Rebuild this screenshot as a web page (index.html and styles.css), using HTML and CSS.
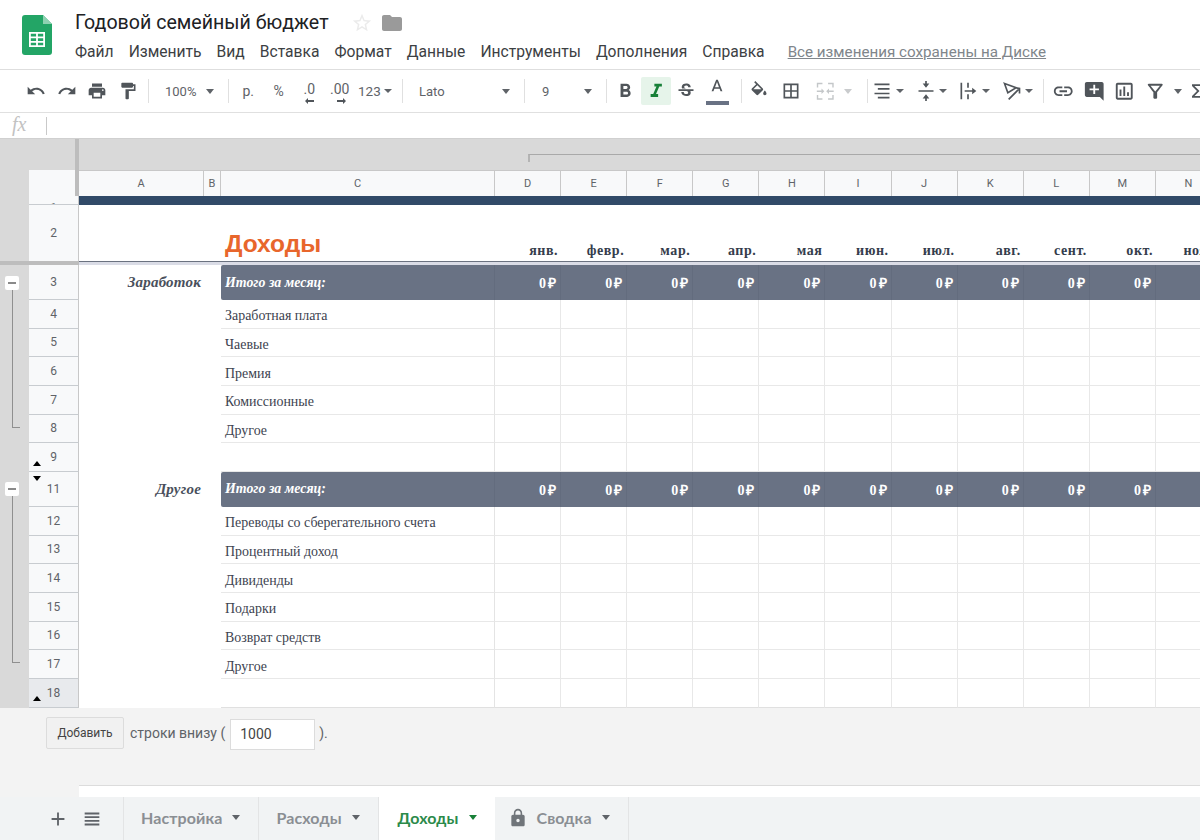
FILE: index.html
```html
<!DOCTYPE html>
<html lang="ru">
<head>
<meta charset="utf-8">
<title>Годовой семейный бюджет</title>
<link rel="stylesheet" href="styles.css">
</head>
<body>
<header class="top">
  <svg class="logo" viewBox="0 0 30 40"><path fill="#23a566" d="M3 0h18l9 9v28a3 3 0 0 1-3 3H3a3 3 0 0 1-3-3V3a3 3 0 0 1 3-3z"/><path fill="#8ed1b1" d="M21 0l9 9h-9z"/><path fill="#fff" fill-rule="evenodd" d="M7 17h16v15H7zm1.800 1.800v2.800h5.300v-2.800zm7.100 0v2.800h5.300v-2.800zm-7.100 4.500v2.800h5.300v-2.800zm7.100 0v2.800h5.300v-2.800zm-7.100 4.500v2.400h5.300v-2.400zm7.100 0v2.400h5.300v-2.400z"/></svg>
  <div class="top-main">
    <div class="title-row">
      <span class="doc-title">Годовой семейный бюджет</span>
      <svg class="star" viewBox="0 0 24 24"><path d="M22 9.24l-7.19-.62L12 2 9.19 8.63 2 9.24l5.46 4.73L5.82 21 12 17.27 18.18 21l-1.63-7.03L22 9.24zM12 15.4l-3.76 2.27 1-4.28-3.32-2.88 4.38-.38L12 6.1l1.71 4.04 4.38.38-3.32 2.88 1 4.28L12 15.4z"/></svg>
      <svg class="folder" viewBox="0 0 24 24"><path d="M10 4H4c-1.1 0-1.99.9-1.99 2L2 18c0 1.1.9 2 2 2h16c1.1 0 2-.9 2-2V8c0-1.1-.9-2-2-2h-8l-2-2z"/></svg>
    </div>
    <nav class="menu">
      <span>Файл</span><span>Изменить</span><span>Вид</span><span>Вставка</span><span>Формат</span><span>Данные</span><span>Инструменты</span><span>Дополнения</span><span>Справка</span>
      <a class="saved">Все изменения сохранены на Диске</a>
    </nav>
  </div>
</header>

<div class="toolbar">
  <div class="tb"><svg class="ic" viewBox="0 0 24 24"><path d="M12.5 8c-2.65 0-5.05.99-6.9 2.6L2 7v9h9l-3.62-3.62c1.39-1.16 3.16-1.88 5.12-1.88 3.54 0 6.55 2.31 7.6 5.5l2.37-.78C21.08 11.03 17.15 8 12.5 8z"/></svg></div>
  <div class="tb"><svg class="ic" viewBox="0 0 24 24"><path d="M18.4 10.6C16.55 8.99 14.15 8 11.5 8c-4.65 0-8.58 3.03-9.96 7.22L3.9 16c1.05-3.19 4.05-5.5 7.6-5.5 1.95 0 3.73.72 5.12 1.88L13 16h9V7l-3.6 3.6z"/></svg></div>
  <div class="tb"><svg class="ic" viewBox="0 0 24 24"><path d="M19 8H5c-1.66 0-3 1.34-3 3v6h4v4h12v-4h4v-6c0-1.66-1.34-3-3-3zm-3 11H8v-5h8v5zm3-7c-.55 0-1-.45-1-1s.45-1 1-1 1 .45 1 1-.45 1-1 1zm-1-9H6v4h12V3z"/></svg></div>
  <div class="tb"><svg class="ic" viewBox="0 0 24 24"><path d="M18 4V3c0-.55-.45-1-1-1H5c-.55 0-1 .45-1 1v4c0 .55.45 1 1 1h12c.55 0 1-.45 1-1V6h1v4H9v11c0 .55.45 1 1 1h2c.55 0 1-.45 1-1v-9h8V4h-3z"/></svg></div>
  <i class="sep"></i>
  <div class="drop drop-zoom"><span>100%</span><b class="caret"></b></div>
  <i class="sep"></i>
  <div class="fmt-group">
    <div class="tb tb-text">р.</div>
    <div class="tb tb-text">%</div>
    <div class="tb tb-dec">.0<svg viewBox="0 0 10 6"><path d="M0 3l3-3v2h6v2H3v2z"/></svg></div>
    <div class="tb tb-dec">.00<svg viewBox="0 0 10 6"><path d="M10 3L7 0v2H1v2h6v2z"/></svg></div>
    <div class="tb-num">123<b class="caret caret-small"></b></div>
  </div>
  <i class="sep"></i>
  <div class="drop drop-font"><span>Lato</span><b class="caret"></b></div>
  <i class="sep"></i>
  <div class="drop drop-size"><span>9</span><b class="caret"></b></div>
  <i class="sep"></i>
  <div class="tb tb-first"><svg class="ic ic-lg" viewBox="0 0 24 24"><path d="M15.6 10.79c.97-.67 1.65-1.77 1.65-2.79 0-2.26-1.75-4-4-4H7v14h7.04c2.09 0 3.71-1.7 3.71-3.79 0-1.52-.86-2.82-2.15-3.42zM10 6.5h3c.83 0 1.5.67 1.5 1.5s-.67 1.5-1.5 1.5h-3v-3zm3.5 9H10v-3h3.5c.83 0 1.5.67 1.5 1.5s-.67 1.5-1.5 1.5z"/></svg></div>
  <div class="tb tb-on"><svg class="ic ic-lg" viewBox="0 0 24 24"><path d="M10 4v3h2.21l-3.42 8H6v3h8v-3h-2.21l3.42-8H18V4z"/></svg></div>
  <div class="tb"><svg class="ic" viewBox="0 0 24 24"><path d="M6.85 7.08C6.85 4.37 9.45 3 12.24 3c1.64 0 3 .49 3.9 1.28.77.65 1.46 1.73 1.46 3.24h-3.01c0-.31-.05-.59-.15-.85-.29-.86-1.2-1.28-2.25-1.28-1.86 0-2.34 1.02-2.34 1.7 0 .48.25.88.74 1.21.38.25.77.48 1.41.7H7.39c-.21-.34-.54-.89-.54-1.92zM21 12v-2H3v2h9.62c1.15.45 1.96.75 1.96 1.97 0 1-.81 1.67-2.28 1.67-1.54 0-2.93-.54-2.93-2.51H6.4c0 .55.08 1.13.24 1.58.81 2.29 3.29 3.3 5.67 3.3 2.27 0 5.3-.89 5.3-4.05 0-.3-.01-1.16-.48-1.94H21V12z"/></svg></div>
  <div class="tb tb-color"><svg class="ic" viewBox="0 0 24 24"><path d="M11 2L5.5 16h2.25l1.12-3h6.25l1.12 3h2.25L13 2h-2zm-1.38 9L12 4.67 14.38 11H9.62z"/></svg><i class="color-bar"></i></div>
  <i class="sep sep-wide"></i>
  <div class="tb tb-fill"><svg class="ic" viewBox="0 0 24 24"><path d="M16.56 8.94L7.62 0 6.21 1.41l2.38 2.38-5.15 5.15c-.59.59-.59 1.54 0 2.12l5.5 5.5c.29.29.68.44 1.06.44s.77-.15 1.06-.44l5.5-5.5c.59-.58.59-1.53 0-2.12zM5.21 10L10 5.21 14.79 10H5.21zM19 11.5s-2 2.17-2 3.5c0 1.1.9 2 2 2s2-.9 2-2c0-1.33-2-3.5-2-3.5z"/></svg></div>
  <div class="tb tb-gap"><svg class="ic" viewBox="0 0 24 24"><path d="M3 3v18h18V3H3zm8 16H5v-6h6v6zm0-8H5V5h6v6zm8 8h-6v-6h6v6zm0-8h-6V5h6v6z"/></svg></div>
  <div class="tb tb-off"><svg class="ic ic-lg" viewBox="0 0 24 24"><path d="M3 3h6v1.500H4.500V8H3zm12 0h6v5h-1.500V4.500H15zM3 16h1.500v3.500H9V21H3zm16.500 0H21v5h-6v-1.500h4.500zM3 11.200h5V9l3 3-3 3v-2.200H3zm18 0h-5V9l-3 3 3 3v-2.200h5z"/></svg></div>
  <b class="caret caret-off"></b>
  <i class="sep sep-merge"></i>
  <div class="tbc"><svg class="ic" viewBox="0 0 24 24"><path d="M3 3h18v2H3zm4 5.500h14v2H7zM3 14h18v2H3zm4 5h14v2H7z"/></svg><b class="caret caret-small"></b></div>
  <div class="tbc tbc-n"><svg class="ic" viewBox="0 0 24 24"><path d="M3 11h18v2H3zm5-8h3V0h2v3h3l-4 5zm8 18h-3v3h-2v-3H8l4-5z"/></svg><b class="caret caret-small"></b></div>
  <div class="tbc"><svg class="ic" viewBox="0 0 24 24"><path d="M3 2h2v20H3zm8 0h2v6h-2zm0 14h2v6h-2zM8 11h9V8l5 4-5 4v-3H8z"/></svg><b class="caret caret-small"></b></div>
  <div class="tbc tbc-n"><svg class="ic st" viewBox="0 0 24 24"><path d="M3 3l14 5-10 6zM8 22L21 9M15 8l6 1 0 6"/></svg><b class="caret caret-small"></b></div>
  <i class="sep sep-last"></i>
  <div class="tb"><svg class="ic ic-lg" viewBox="0 0 24 24"><path d="M3.900 12c0-1.710 1.390-3.100 3.100-3.100h4V7H7c-2.760 0-5 2.240-5 5s2.240 5 5 5h4v-1.900H7c-1.710 0-3.100-1.390-3.100-3.100zM8 13h8v-2H8v2zm9-6h-4v1.900h4c1.710 0 3.100 1.390 3.100 3.100s-1.390 3.100-3.100 3.100h-4V17h4c2.760 0 5-2.240 5-5s-2.240-5-5-5z"/></svg></div>
  <div class="tb"><svg class="ic ic-lg" viewBox="0 0 24 24"><path d="M21.990 4c0-1.100-.890-2-1.990-2H4c-1.100 0-2 .9-2 2v12c0 1.100.9 2 2 2h14l4 4-.010-18zM17 11h-4v4h-2v-4H7V9h4V5h2v4h4v2z"/></svg></div>
  <div class="tb"><svg class="ic ic-lg" viewBox="0 0 24 24"><path d="M19 3H5c-1.100 0-2 .9-2 2v14c0 1.100.9 2 2 2h14c1.100 0 2-.9 2-2V5c0-1.100-.9-2-2-2zm0 16H5V5h14v14zM9 17H7v-7h2zm4 0h-2V7h2zm4 0h-2v-4h2z"/></svg></div>
  <div class="tb"><svg class="ic ic-lg" viewBox="0 0 24 24"><path d="M7 6h10l-5.010 6.300L7 6zm-2.750-.390C6.270 8.200 10 13 10 13v6c0 .55.45 1 1 1h2c.55 0 1-.45 1-1v-6s3.730-4.800 5.750-7.390C20.260 4.950 19.790 4 18.960 4H5.040c-.83 0-1.300.95-.79 1.610z"/></svg></div>
  <b class="caret caret-filter"></b>
  <svg class="ic ic-more" viewBox="0 0 24 24"><path d="M6 4h12v2H9l6 6-6 6h9v2H6v-2l6-6-6-6z"/></svg>
</div>

<div class="formula">
  <span class="fx">fx</span><i class="fx-sep"></i>
</div>

<main class="sheet">
  <div class="frozen-cols">
    <div class="col-bracket"></div>
    <i class="freeze-handle"></i>
  </div>
  <div class="row row-heads">
    <div class="gut"></div><div class="num"></div>
    <div class="ch">A</div><div class="ch">B</div><div class="ch">C</div><div class="ch">D</div><div class="ch">E</div><div class="ch">F</div><div class="ch">G</div><div class="ch">H</div><div class="ch">I</div><div class="ch">J</div><div class="ch">K</div><div class="ch">L</div><div class="ch">M</div><div class="ch">N</div>
  </div>
  <div class="row r1"><div class="gut"></div><div class="num">1</div><div class="band-dark"></div></div>
  <div class="row r2">
    <div class="gut"></div><div class="num">2</div>
    <div class="c-ab"></div>
    <div class="c-c"><h1>Доходы</h1></div>
    <div class="m">янв.</div><div class="m">февр.</div><div class="m">мар.</div><div class="m">апр.</div><div class="m">мая</div><div class="m">июн.</div><div class="m">июл.</div><div class="m">авг.</div><div class="m">сент.</div><div class="m">окт.</div><div class="m">нояб.</div>
  </div>
  <div class="freeze-line"><i></i></div>

  <div class="row r-total r35">
    <div class="gut"></div><div class="num">3</div>
    <div class="c-ab cat">Заработок</div>
    <div class="total-label">Итого за месяц:</div>
    <div class="t">0 ₽</div><div class="t">0 ₽</div><div class="t">0 ₽</div><div class="t">0 ₽</div><div class="t">0 ₽</div><div class="t">0 ₽</div><div class="t">0 ₽</div><div class="t">0 ₽</div><div class="t">0 ₽</div><div class="t">0 ₽</div><div class="t"></div>
  </div>
  <div class="row rh"><div class="gut"></div><div class="num">4</div><div class="c-ab"></div><div class="c-c">Заработная плата</div><div class="d"></div><div class="d"></div><div class="d"></div><div class="d"></div><div class="d"></div><div class="d"></div><div class="d"></div><div class="d"></div><div class="d"></div><div class="d"></div><div class="d"></div></div>
  <div class="row rh"><div class="gut"></div><div class="num">5</div><div class="c-ab"></div><div class="c-c">Чаевые</div><div class="d"></div><div class="d"></div><div class="d"></div><div class="d"></div><div class="d"></div><div class="d"></div><div class="d"></div><div class="d"></div><div class="d"></div><div class="d"></div><div class="d"></div></div>
  <div class="row rh"><div class="gut"></div><div class="num">6</div><div class="c-ab"></div><div class="c-c">Премия</div><div class="d"></div><div class="d"></div><div class="d"></div><div class="d"></div><div class="d"></div><div class="d"></div><div class="d"></div><div class="d"></div><div class="d"></div><div class="d"></div><div class="d"></div></div>
  <div class="row rh"><div class="gut"></div><div class="num">7</div><div class="c-ab"></div><div class="c-c">Комиссионные</div><div class="d"></div><div class="d"></div><div class="d"></div><div class="d"></div><div class="d"></div><div class="d"></div><div class="d"></div><div class="d"></div><div class="d"></div><div class="d"></div><div class="d"></div></div>
  <div class="row rh"><div class="gut"></div><div class="num">8</div><div class="c-ab"></div><div class="c-c">Другое</div><div class="d"></div><div class="d"></div><div class="d"></div><div class="d"></div><div class="d"></div><div class="d"></div><div class="d"></div><div class="d"></div><div class="d"></div><div class="d"></div><div class="d"></div></div>
  <div class="row rh"><div class="gut"></div><div class="num">9</div><div class="c-ab"></div><div class="c-c"></div><div class="d"></div><div class="d"></div><div class="d"></div><div class="d"></div><div class="d"></div><div class="d"></div><div class="d"></div><div class="d"></div><div class="d"></div><div class="d"></div><div class="d"></div></div>

  <div class="row r-total r35">
    <div class="gut"></div><div class="num">11</div>
    <div class="c-ab cat">Другое</div>
    <div class="total-label">Итого за месяц:</div>
    <div class="t">0 ₽</div><div class="t">0 ₽</div><div class="t">0 ₽</div><div class="t">0 ₽</div><div class="t">0 ₽</div><div class="t">0 ₽</div><div class="t">0 ₽</div><div class="t">0 ₽</div><div class="t">0 ₽</div><div class="t">0 ₽</div><div class="t"></div>
  </div>
  <div class="row rh"><div class="gut"></div><div class="num">12</div><div class="c-ab"></div><div class="c-c">Переводы со сберегательного счета</div><div class="d"></div><div class="d"></div><div class="d"></div><div class="d"></div><div class="d"></div><div class="d"></div><div class="d"></div><div class="d"></div><div class="d"></div><div class="d"></div><div class="d"></div></div>
  <div class="row rh"><div class="gut"></div><div class="num">13</div><div class="c-ab"></div><div class="c-c">Процентный доход</div><div class="d"></div><div class="d"></div><div class="d"></div><div class="d"></div><div class="d"></div><div class="d"></div><div class="d"></div><div class="d"></div><div class="d"></div><div class="d"></div><div class="d"></div></div>
  <div class="row rh"><div class="gut"></div><div class="num">14</div><div class="c-ab"></div><div class="c-c">Дивиденды</div><div class="d"></div><div class="d"></div><div class="d"></div><div class="d"></div><div class="d"></div><div class="d"></div><div class="d"></div><div class="d"></div><div class="d"></div><div class="d"></div><div class="d"></div></div>
  <div class="row rh"><div class="gut"></div><div class="num">15</div><div class="c-ab"></div><div class="c-c">Подарки</div><div class="d"></div><div class="d"></div><div class="d"></div><div class="d"></div><div class="d"></div><div class="d"></div><div class="d"></div><div class="d"></div><div class="d"></div><div class="d"></div><div class="d"></div></div>
  <div class="row rh"><div class="gut"></div><div class="num">16</div><div class="c-ab"></div><div class="c-c">Возврат средств</div><div class="d"></div><div class="d"></div><div class="d"></div><div class="d"></div><div class="d"></div><div class="d"></div><div class="d"></div><div class="d"></div><div class="d"></div><div class="d"></div><div class="d"></div></div>
  <div class="row rh"><div class="gut"></div><div class="num">17</div><div class="c-ab"></div><div class="c-c">Другое</div><div class="d"></div><div class="d"></div><div class="d"></div><div class="d"></div><div class="d"></div><div class="d"></div><div class="d"></div><div class="d"></div><div class="d"></div><div class="d"></div><div class="d"></div></div>
  <div class="row rh r-last"><div class="gut"></div><div class="num num-sel">18</div><div class="c-ab"></div><div class="c-c"></div><div class="d"></div><div class="d"></div><div class="d"></div><div class="d"></div><div class="d"></div><div class="d"></div><div class="d"></div><div class="d"></div><div class="d"></div><div class="d"></div><div class="d"></div></div>

  <div class="add-rows">
    <button class="add-btn">Добавить</button>
    <span>строки внизу (</span>
    <span class="add-input">1000</span>
    <span>).</span>
  </div>

  <i class="outline-btn ob1"></i><i class="outline-line ol1"></i>
  <i class="outline-btn ob2"></i><i class="outline-line ol2"></i>
  <i class="tri tri-up a1"></i><i class="tri tri-down a2"></i><i class="tri tri-up a3"></i>
</main>

<div class="strip"><i></i></div>

<footer class="tabs">
  <div class="tab-tools">
    <svg class="tool" viewBox="0 0 24 24"><path d="M19 13h-6v6h-2v-6H5v-2h6V5h2v6h6z"/></svg>
    <svg class="tool" viewBox="0 0 24 24"><path d="M4 5h16v2H4zm0 4h16v2H4zm0 4h16v2H4zm0 4h16v2H4z"/></svg>
  </div>
  <div class="tab">Настройка<b class="caret"></b></div>
  <div class="tab">Расходы<b class="caret"></b></div>
  <div class="tab tab-on">Доходы<b class="caret"></b></div>
  <div class="tab tab-lock"><svg viewBox="0 0 24 24"><path d="M18 8h-1V6c0-2.760-2.240-5-5-5S7 3.240 7 6v2H6c-1.100 0-2 .9-2 2v10c0 1.100.9 2 2 2h12c1.100 0 2-.9 2-2V10c0-1.100-.9-2-2-2zm-6 9c-1.100 0-2-.9-2-2s.9-2 2-2 2 .9 2 2-.9 2-2 2zm3.100-9H8.900V6c0-1.710 1.390-3.100 3.100-3.100 1.710 0 3.100 1.390 3.100 3.100v2z"/></svg>Сводка<b class="caret"></b></div>
</footer>
</body>
</html>
```

FILE: styles.css
```css
* { box-sizing: border-box; }
html, body { margin: 0; height: 840px; overflow: hidden; background: #fff; }
body { font-family: Roboto, "Liberation Sans", sans-serif; color: #3c4043; width: 1200px; position: relative; }
i { display: block; }

/* header */
.top { height: 70px; display: flex; border-bottom: 1px solid #dedede; }
.logo { width: 30px; height: 40px; margin: 15px 0 0 22px; flex: none; }
.top-main { margin-left: 23px; }
.title-row { height: 34px; padding-top: 11px; display: flex; align-items: center; }
.doc-title { font-size: 19.6px; color: #202124; line-height: 24px; }
.star { width: 22px; height: 22px; margin-left: 22px; fill: #ebebeb; }
.folder { width: 24px; height: 24px; margin-left: 7px; fill: #9a9a9a; }
.menu { display: flex; gap: 15px; margin-top: 8px; font-size: 15.63px; line-height: 20px; color: #3c4043; white-space: nowrap; }
.saved { margin-left: 8px; font-size: 15.2px; color: #80868b; text-decoration: underline; }

/* toolbar */
.toolbar { height: 43px; padding-left: 21px; display: flex; align-items: center; border-bottom: 1px solid #e0e0e0; white-space: nowrap; overflow: hidden; }
.tb { width: 30.5px; height: 28px; display: flex; align-items: center; justify-content: center; flex: none; position: relative; }
.ic { width: 20px; height: 20px; fill: #50555a; flex: none; }
.ic-lg { width: 22.5px; height: 22.5px; }
.st { fill: none; stroke: #50555a; stroke-width: 2; }
.sep { width: 1px; height: 24px; background: #e0e0e0; margin-left: 5px; flex: none; }
.caret { display: block; width: 0; height: 0; border: 4px solid transparent; border-top: 5px solid #5f6368; border-bottom: 0; flex: none; }
.caret-small { border-width: 4px; border-top-width: 4px; border-bottom: 0; margin-left: 1px; }
.drop { display: flex; align-items: center; justify-content: space-between; font-size: 13px; color: #5f6368; height: 28px; flex: none; }
.drop-zoom { width: 74px; padding: 0 9px 0 16px; }
.drop-font { width: 116px; padding: 0 9px 0 16px; }
.drop-size { width: 76px; padding: 0 9px 0 17px; }
.fmt-group { display: flex; align-items: center; padding-left: 4px; width: 168px; font-size: 13px; color: #5f6368; flex: none; }
.tb-text { font-size: 14px; }
.tb-dec { font-size: 14px; padding-bottom: 5px; }
.tb-dec svg { position: absolute; width: 10px; height: 6px; left: 11px; bottom: 1px; fill: #50555a; }
.tb-num { display: flex; align-items: center; padding-left: 3px; font-size: 13.5px; }
.tb-num .caret { margin-left: 3px; }
.tb-first { margin-left: 3px; }
.tb-on { background: #e6f4ea; border-radius: 2px; }
.tb-on .ic { fill: #188038; }
.tb-color .ic { margin-top: -6px; }
.color-bar { position: absolute; left: 4px; right: 3px; bottom: 0; height: 4px; background: #697284; }
.sep-wide { margin-left: 9px; }
.tb-fill { margin-left: 2px; }
.tb-gap { margin-left: 1px; }
.tb-off { margin-left: 4px; }
.tb-off .ic { fill: #c4c7c9; }
.caret-off { margin-left: 3px; border-top-color: #c9cbcd; }
.sep-merge { margin-left: 15px; }
.tbc { width: 44.5px; height: 28px; display: flex; align-items: center; padding-left: 4px; flex: none; }
.tbc .caret { margin-left: 4px; }
.tbc-n { width: 41.5px; }
.tbc-n .caret { margin-left: 3px; }
.sep-last { margin-left: 3px; margin-right: 4.5px; }
.caret-filter { margin-left: 4px; }
.ic-more { margin-left: 5px; }

/* formula bar */
.formula { height: 26px; display: flex; align-items: center; border-bottom: 1px solid #d0d0d0; }
.fx { font-family: "Liberation Serif", serif; font-style: italic; font-size: 20px; color: #c2c2c2; margin-left: 12px; width: 34px; position: relative; top: -1px; }
.fx-sep { width: 1px; height: 18px; background: #c9c9c9; }

/* sheet */
.sheet { position: relative; height: 646px; }
.frozen-cols { height: 31px; background: #d9d9d9; position: relative; }
.freeze-handle { position: absolute; left: 75px; top: 0; width: 4px; height: 57px; background: #bdbdbd; z-index: 2; }
.col-bracket { position: absolute; left: 528px; right: 0; top: 15px; height: 8px; border-top: 1px solid #a9a9a9; border-left: 2px solid #b4b4b4; }
.row { display: grid; grid-template-columns: 29px 50px 125px 17px 274px repeat(11, 66.1px); }
.gut { background: #d9d9d9; }
.num { background: #f8f9fa; border-right: 1px solid #c8c8c8; border-bottom: 1px solid #c8ccd0; display: flex; align-items: center; justify-content: center; font-size: 12px; color: #5f6368; overflow: hidden; }
.row-heads { height: 26px; background: #d9d9d9; }
.row-heads .num { border-bottom: 0; }
.ch { background: #f8f9fa; border-top: 1px solid #c8c8c8; border-right: 1px solid #c8c8c8; display: flex; align-items: center; justify-content: center; font-size: 11px; color: #5f6368; }
.r1 { height: 9px; }
.r1 .num { align-items: flex-start; font-size: 11px; padding-top: 5px; }
.band-dark { grid-column: 3 / -1; background: #314a68; }
.r2 { height: 56px; }
.r2 .num { border-bottom: 0; }
.c-ab { grid-column: 3 / 5; }
h1 { margin: 0; font-family: "Liberation Sans", sans-serif; font-size: 24.5px; line-height: 29px; font-weight: 700; color: #e8662c; }
.r2 .c-c { display: flex; align-items: flex-end; padding: 0 0 3px 4px; border: 0; }
.m { display: flex; align-items: flex-end; justify-content: flex-end; padding: 0 3px 2px 0; font-family: "Liberation Serif", serif; font-weight: 700; font-size: 14px; letter-spacing: .55px; color: #353d4c; white-space: nowrap; line-height: 16px; }
.freeze-line { height: 4px; display: grid; grid-template-columns: 79px 1fr; background: #dadce6; border-top: 1px solid #6b7280; }
.freeze-line i { background: #bdbdbd; height: 4px; margin-top: -1px; }
.rh { height: 28.67px; }
.c-c { padding-left: 4px; font-family: "Liberation Serif", serif; font-size: 13.95px; color: #3d4350; display: flex; align-items: center; padding-top: 5px; border-bottom: 1px solid #e8e8e8; border-right: 1px solid #e4e4e4; white-space: nowrap; }
.d { border-bottom: 1px solid #e8e8e8; border-right: 1px solid #e8e8e8; }
.r-last .c-c, .r-last .d { border-bottom: 1px solid #e0e0e0; }
.r35 { height: 35px; }
.cat { display: flex; align-items: center; justify-content: flex-end; padding-right: 20px; font-family: "Liberation Serif", serif; font-weight: 700; font-style: italic; font-size: 15px; letter-spacing: .2px; color: #4a505c; }
.total-label { background: #697284; border-radius: 2px 0 0 2px; padding: 0 0 0 4px; display: flex; align-items: center; font-family: "Liberation Serif", serif; font-weight: 700; font-style: italic; font-size: 13.9px; color: #fff; border-right: 1px solid #636c7e; }
.t { background: #697284; display: flex; align-items: center; justify-content: flex-end; padding-right: 3px; font-family: "Liberation Serif", serif; font-weight: 700; font-size: 14px; letter-spacing: 1px; word-spacing: -3.5px; color: #fff; white-space: nowrap; border-right: 1px solid #636c7e; }
.num-sel { background: #e8eaed; }

/* outline controls */
.outline-btn { position: absolute; left: 5px; width: 14px; height: 14px; background: #fff; border-radius: 2px; }
.outline-btn::after { content: ""; position: absolute; left: 3px; right: 3px; top: 6px; height: 2px; background: #8a8a8a; }
.ob1 { top: 137px; }
.ob2 { top: 343px; }
.outline-line { position: absolute; left: 12px; width: 8px; border-left: 1px solid #8f8f8f; border-bottom: 1px solid #8f8f8f; }
.ol1 { top: 151px; height: 138px; }
.ol2 { top: 357px; height: 167px; }
.tri { position: absolute; left: 33px; width: 0; height: 0; border: 4px solid transparent; z-index: 2; }
.tri-up { border-top: 0; border-bottom: 5px solid #000; }
.tri-down { border-bottom: 0; border-top: 5px solid #000; }
.a1 { top: 322px; }
.a2 { top: 337px; }
.a3 { top: 557px; }

/* add rows */
.add-rows { height: 77px; background: #f3f3f3; display: flex; align-items: flex-start; padding: 9.500px 0 0 46px; font-size: 14px; color: #5f6368; line-height: 32px; }
.add-btn { width: 78px; height: 32px; padding: 0; background: #f1f1f1; border: 1px solid #dcdcdc; border-radius: 2px; font: 12px Roboto, sans-serif; color: #444; margin-right: 6px; }
.add-input { width: 85px; height: 31px; margin: 2px 4px 0 5px; padding-left: 9px; background: #fff; border: 1px solid #dcdcdc; font-size: 14px; color: #444; line-height: 29px; }

.strip { height: 12px; background: #f3f3f3; position: relative; }
.strip i { position: absolute; left: 79px; right: 0; top: 0; bottom: 0; background: #fff; border-top: 1px solid #dcdcdc; }

/* tabs */
.tabs { height: 43px; display: flex; background: #f1f3f4; }
.tab-tools { width: 124px; display: flex; align-items: center; padding-left: 47px; gap: 12px; border-right: 1px solid #e3e4e5; flex: none; }
.tool { width: 22px; height: 22px; fill: #5f6368; }
.tab { display: flex; align-items: center; gap: 10px; padding: 0 18px 2px 17px; font-family: Lato, Roboto, sans-serif; font-size: 16px; font-weight: 700; letter-spacing: .1px; color: #8a8e93; border-right: 1px solid #e3e4e5; white-space: nowrap; }
.tab-on { background: #fff; color: #2b8a4a; border: 0; padding: 0 18px 2px 19px; }
.tab-on .caret { border-top-color: #188038; }
.tab-lock { padding-left: 13px; }
.tab-lock svg { width: 20px; height: 20px; fill: #70757a; margin-right: -1px; }
```
